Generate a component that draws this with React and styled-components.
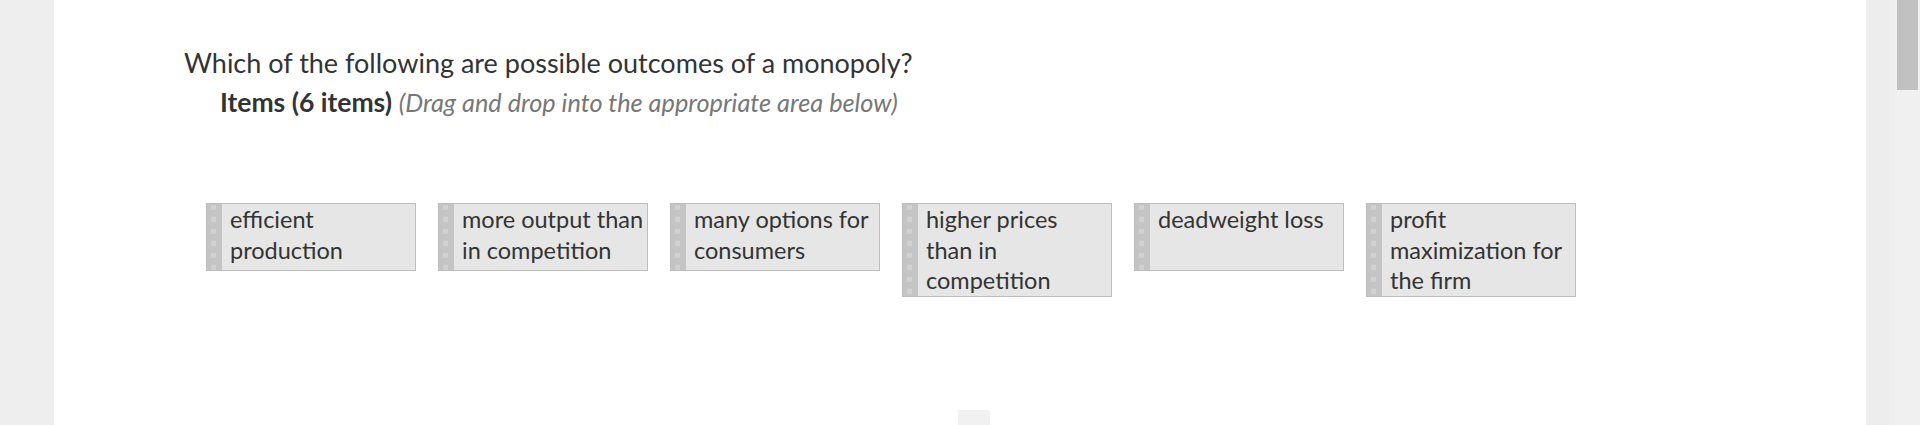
import React from "react";
import styled, { createGlobalStyle } from "styled-components";

const GlobalStyle = createGlobalStyle`
  html, body { margin: 0; padding: 0; background: #eeeeee; }
  body { font-family: Lato, "Open Sans", "Liberation Sans", sans-serif; }
`;

const Page = styled.div`
  display: flex;
  height: 425px;
  overflow: hidden;
`;

const Gutter = styled.div`
  flex: 0 0 ${(p) => p.$w}px;
  background: ${(p) => p.$bg};
`;

const Panel = styled.main`
  flex: 1;
  background: #ffffff;
  display: flex;
  flex-direction: column;
  align-items: flex-start;
  padding: 47px 0 0 130px;
  box-sizing: border-box;
`;

const Question = styled.div`
  font-size: 27px;
  line-height: 32px;
  color: #333333;
  white-space: nowrap;
`;

const ItemsHeader = styled.div`
  margin: 7px 0 0 36px;
  font-size: 26.5px;
  line-height: 32px;
  color: #333333;
  white-space: nowrap;
`;

const Strong = styled.strong`
  font-weight: 700;
`;

const Hint = styled.em`
  font-style: italic;
  color: #777777;
  font-size: 25.3px;
`;

const CardRow = styled.div`
  display: flex;
  align-items: flex-start;
  gap: 22px;
  margin: 85px 0 0 22px;
`;

const Card = styled.div`
  width: 210px;
  min-height: 68px;
  box-sizing: border-box;
  display: flex;
  align-items: stretch;
  background: #e6e6e6;
  border: 1px solid #bdbdbd;
`;

const Handle = styled.div`
  flex: 0 0 15px;
  background: #c4c4c4;
  display: flex;
  padding: 1px 0 0 4px;
  box-sizing: border-box;
`;

const Dots = styled.div`
  width: 5px;
  background: repeating-linear-gradient(
    to bottom,
    #d1d1d1 0 5px,
    transparent 5px 12px
  );
`;

const CardText = styled.div`
  flex: 1;
  padding: 0 2px 0 8px;
  font-size: 23.5px;
  line-height: 30.5px;
  color: #333333;
`;

const Line = styled.span`
  display: block;
  white-space: nowrap;
`;

const BottomTab = styled.div`
  margin: auto 0 0 774px;
  width: 32px;
  height: 15px;
  background: #f1f1f1;
`;

const Scrollbar = styled.div`
  flex: 0 0 25px;
  background: #f0f0f0;
  padding: 0 2px;
  box-sizing: border-box;
`;

const Thumb = styled.div`
  height: 90px;
  background: #c1c1c1;
`;

const items = [
  ["efficient", "production"],
  ["more output than", "in competition"],
  ["many options for", "consumers"],
  ["higher prices", "than in", "competition"],
  ["deadweight loss"],
  ["profit", "maximization for", "the firm"],
];

export default function App() {
  return (
    <>
      <GlobalStyle />
      <Page>
        <Gutter $w={54} $bg="#eeeeee" />
        <Panel>
          <Question>Which of the following are possible outcomes of a monopoly?</Question>
          <ItemsHeader>
            <Strong>Items (6 items)</Strong>{" "}
            <Hint>(Drag and drop into the appropriate area below)</Hint>
          </ItemsHeader>
          <CardRow>
            {items.map((lines) => (
              <Card key={lines.join(" ")}>
                <Handle>
                  <Dots />
                </Handle>
                <CardText>
                  {lines.map((l) => (
                    <Line key={l}>{l}</Line>
                  ))}
                </CardText>
              </Card>
            ))}
          </CardRow>
          <BottomTab />
        </Panel>
        <Gutter $w={29} $bg="#ededed" />
        <Scrollbar>
          <Thumb />
        </Scrollbar>
      </Page>
    </>
  );
}
